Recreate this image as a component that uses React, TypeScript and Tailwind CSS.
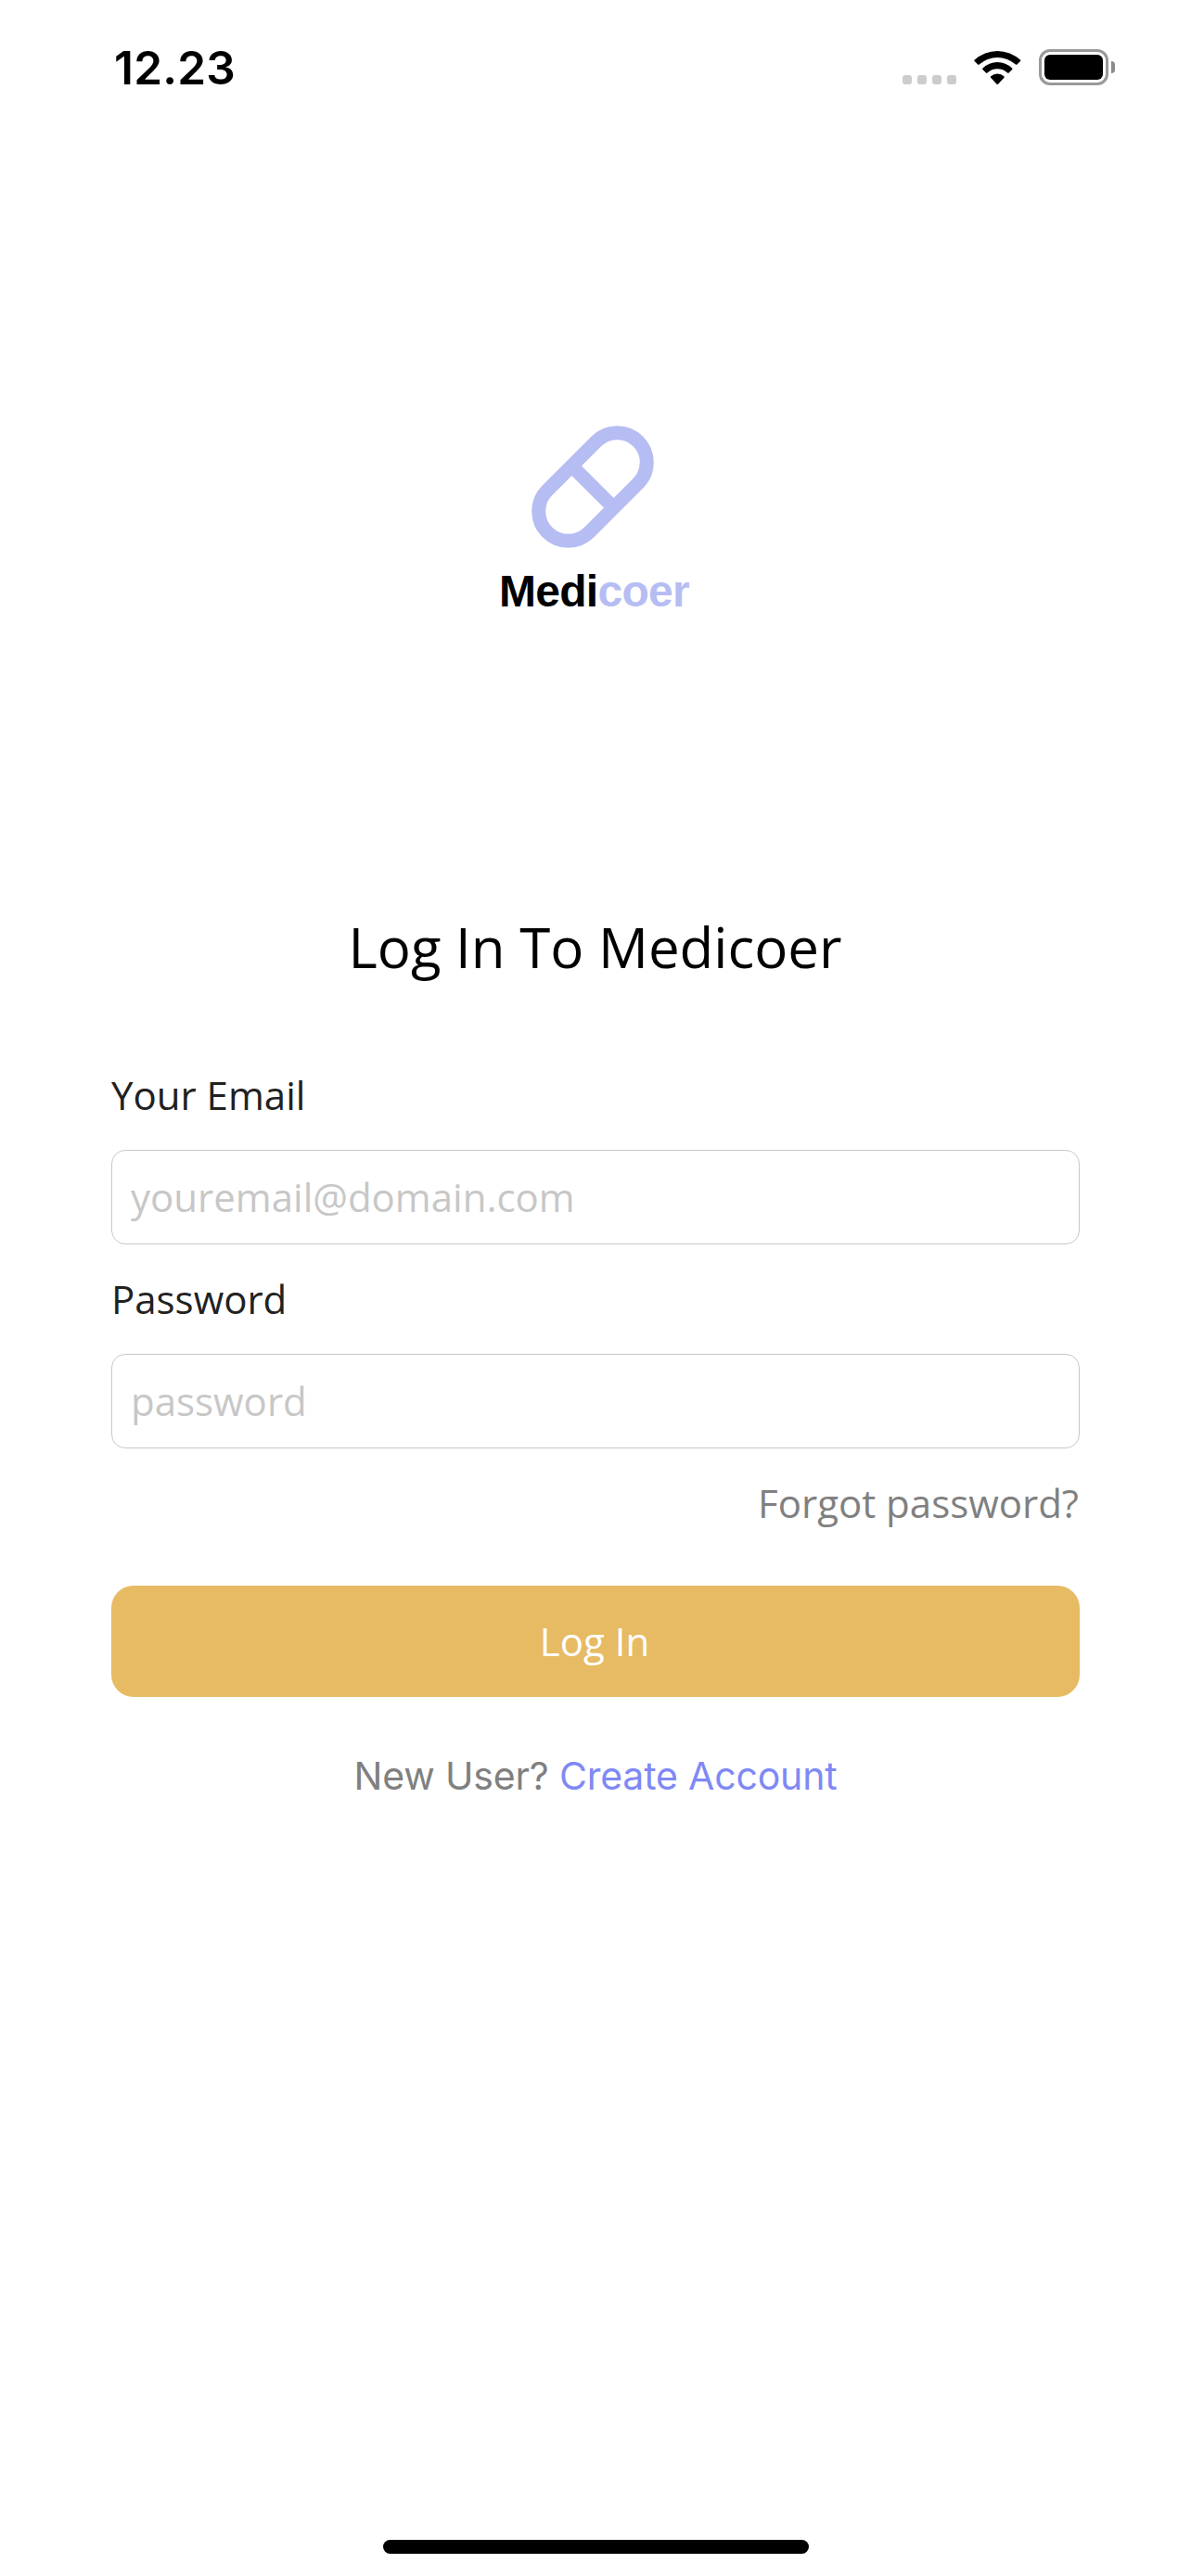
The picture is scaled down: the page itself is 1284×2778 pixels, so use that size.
import React from "react";

function StatusBar() {
  return (
    <header className="flex h-[145px] items-start justify-between pl-[123px] pr-[82px] pt-[48px]">
      <div className="h-[50px] font-['Inter'] text-[49.5px] font-semibold leading-[50px] tracking-[0.2px] text-black">
        12.23
      </div>
      <div className="flex pt-[5px]">
        <div className="mt-[28px] flex gap-[6px]">
          <i className="size-[10px] rounded-[3px] bg-[#cccccc]" />
          <i className="size-[10px] rounded-[3px] bg-[#cccccc]" />
          <i className="size-[10px] rounded-[3px] bg-[#cccccc]" />
          <i className="size-[10px] rounded-[3px] bg-[#cccccc]" />
        </div>
        <svg className="ml-[19px] mt-px h-[38px] w-[51px]" viewBox="0 0 51 38" fill="#000">
          <path d="M0.7 10.6A36 36 0 0 1 49.9 10.6Q50.7 11.3 50 12L46.4 15.6Q45.7 16.3 45 15.6A29.2 29.2 0 0 0 5.6 15.6Q4.9 16.3 4.2 15.6L0.6 12Q-0.1 11.3 0.7 10.6Z" />
          <path d="M9.5 19.6A22.5 22.5 0 0 1 41.1 19.6Q41.9 20.3 41.2 21L37.6 24.6Q36.9 25.3 36.2 24.6A16 16 0 0 0 14.4 24.6Q13.7 25.3 13 24.6L9.4 21Q8.7 20.3 9.5 19.6Z" />
          <path d="M18.2 28.3A10.5 10.5 0 0 1 32.4 28.3Q33.2 29 32.5 29.7L26 36.7Q25.3 37.4 24.6 36.7L18.1 29.7Q17.4 29 18.2 28.3Z" />
        </svg>
        <div className="ml-[19px] h-[39px] w-[75px] rounded-[12px] border-[3px] border-[#999999] p-[3px]">
          <div className="h-full rounded-[6px] bg-black" />
        </div>
        <div className="ml-[3px] mt-[13px] h-[13px] w-[4px] rounded-r-full bg-[#8a8a8a]" />
      </div>
    </header>
  );
}

function Logo() {
  return (
    <div className="flex flex-col items-center pt-[314px]">
      <svg className="mr-[6px] h-[132px] w-[132px]" viewBox="-66 -66 132 132" fill="none" stroke="#b6bdf2" strokeWidth="15">
        <g transform="rotate(-45)">
          <rect x="-69.2" y="-31.9" width="138.4" height="63.8" rx="31.9" />
          <path d="M0 -31.9V31.9" />
        </g>
      </svg>
      <div className="mr-[3px] mt-[20px] h-[54px] font-['Liberation_Sans'] text-[48px] font-bold leading-[54px] tracking-[-0.7px] text-black">
        Medi<span className="text-[#b6bdf2]">coer</span>
      </div>
    </div>
  );
}

function Field({ label, placeholder, type }: { label: string; placeholder: string; type: string }) {
  return (
    <label className="mb-[30px] block">
      <span className="block h-[57px] leading-[57px] text-[#212121]">{label}</span>
      <input
        type={type}
        placeholder={placeholder}
        className="mt-[31px] block h-[102px] w-full rounded-[15px] border border-[#c8c8c8] bg-white px-[20px] pb-[2px] placeholder:text-[#c7c7c7] placeholder:opacity-100"
      />
    </label>
  );
}

export default function App() {
  return (
    <div className="flex h-[2778px] w-[1284px] flex-col bg-white font-['Open_Sans']">
      <StatusBar />
      <Logo />
      <main className="mt-[315px] px-[120px] text-[42px]">
        <h1 className="h-[82px] pr-px text-center text-[60px] leading-[82px] text-black">Log In To Medicoer</h1>
        <form className="mt-[90px]">
          <Field label="Your Email" placeholder="youremail@domain.com" type="email" />
          <Field label="Password" placeholder="password" type="password" />
          <div className="h-[57px] pr-px text-right leading-[57px] text-[#808080]">Forgot password?</div>
          <button type="button" className="mt-[61px] block h-[120px] w-full rounded-[24px] bg-[#e7bb64] pb-[2px] pr-[2px] text-white">
            Log In
          </button>
        </form>
        <p className="mt-[60px] h-[50px] whitespace-pre text-center font-['Inter'] text-[41px] leading-[50px] tracking-[-0.18px] text-[#808080]">
          New User? <span className="text-[#7f89f5]">Create Account</span>
        </p>
      </main>
      <footer className="mb-[24px] mt-auto flex justify-center">
        <div className="h-[15px] w-[459px] rounded-full bg-black" />
      </footer>
    </div>
  );
}
